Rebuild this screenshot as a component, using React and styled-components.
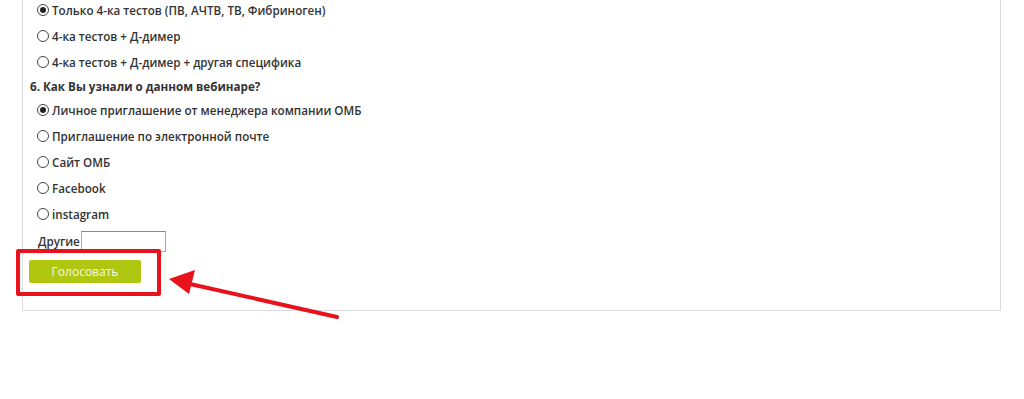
import React from "react";
import styled, { createGlobalStyle } from "styled-components";

const GlobalStyle = createGlobalStyle`
  body {
    margin: 0;
    background: #ffffff;
    font-family: "Open Sans", "Liberation Sans", sans-serif;
    color: #333333;
    overflow: hidden;
  }
`;

const Page = styled.div`
  width: 1024px;
  height: 399px;
  overflow: hidden;
`;

const Panel = styled.div`
  margin: -3px 0 0 22px;
  width: 977px;
  border: 1px solid #dcdcdc;
  border-top: none;
  padding: 0 0 27px 0;
  display: flex;
  flex-direction: column;
`;

const Option = styled.label`
  display: flex;
  align-items: center;
  gap: 3px;
  height: 26px;
  padding-left: 14px;
  font-size: 11.65px;
  font-weight: 600;
  color: #333;
`;

const Radio = styled.span`
  width: 12px;
  height: 12px;
  box-sizing: border-box;
  border-radius: 50%;
  border: 1px solid #444;
  background: #fff;
  display: flex;
  align-items: center;
  justify-content: center;

  &::after {
    content: "";
    width: 6px;
    height: 6px;
    border-radius: 50%;
    background: ${({ $checked }) => ($checked ? "#222" : "transparent")};
  }
`;

const Question = styled.div`
  height: 22px;
  display: flex;
  align-items: center;
  padding-left: 7px;
  font-size: 11.65px;
  font-weight: 700;
  color: #333;
`;

const OtherRow = styled.div`
  display: flex;
  align-items: center;
  margin-top: 4px;
  padding-left: 15px;
  font-size: 11.65px;
  font-weight: 600;
  color: #333;
  gap: 1px;
`;

const OtherLabel = styled.span`
  margin-top: 0px;
`;

const OtherInput = styled.input`
  width: 85px;
  height: 21px;
  box-sizing: border-box;
  border: 1px solid #a9a9a9;
  border-top-color: #8a8a8a;
  padding: 0 3px;
  margin: 0;
  font-size: 12px;
`;

const SubmitArea = styled.div`
  position: relative;
  margin: 7px 0 0 6px;
  width: 112px;
`;

const VoteButton = styled.button`
  width: 112px;
  height: 23px;
  border: none;
  border-radius: 2px;
  background: #afc710;
  color: #f7f9ea;
  font-family: "Open Sans", "Liberation Sans", sans-serif;
  font-size: 12px;
  font-weight: 400;
  padding: 0;
  cursor: pointer;
`;

const Highlight = styled.div`
  position: absolute;
  left: -13px;
  top: -10px;
  width: 145px;
  height: 47px;
  box-sizing: border-box;
  border: 4px solid #e8121c;
  border-radius: 2px;
  pointer-events: none;
`;

const Arrow = styled.svg`
  position: absolute;
  left: 160px;
  top: 260px;
  pointer-events: none;
`;

const first = [
  { text: "Только 4-ка тестов (ПВ, АЧТВ, ТВ, Фибриноген)", checked: true },
  { text: "4-ка тестов + Д-димер" },
  { text: "4-ка тестов + Д-димер + другая специфика" },
];

const second = [
  { text: "Личное приглашение от менеджера компании ОМБ", checked: true },
  { text: "Приглашение по электронной почте" },
  { text: "Сайт ОМБ" },
  { text: "Facebook" },
  { text: "instagram" },
];

export default function App() {
  return (
    <Page>
      <GlobalStyle />
      <Panel>
        {first.map((o) => (
          <Option key={o.text}>
            <Radio $checked={o.checked} />
            {o.text}
          </Option>
        ))}
        <Question>6. Как Вы узнали о данном вебинаре?</Question>
        {second.map((o) => (
          <Option key={o.text}>
            <Radio $checked={o.checked} />
            {o.text}
          </Option>
        ))}
        <OtherRow>
          <OtherLabel>Другие</OtherLabel>
          <OtherInput type="text" />
        </OtherRow>
        <SubmitArea>
          <VoteButton>Голосовать</VoteButton>
          <Highlight />
        </SubmitArea>
      </Panel>
      <Arrow width="190" height="70" viewBox="0 0 190 70">
        <line x1="177" y1="57" x2="30" y2="24" stroke="#e8121c" strokeWidth="4" strokeLinecap="round" />
        <polygon points="9,19 35,10 29,34" fill="#e8121c" />
      </Arrow>
    </Page>
  );
}
